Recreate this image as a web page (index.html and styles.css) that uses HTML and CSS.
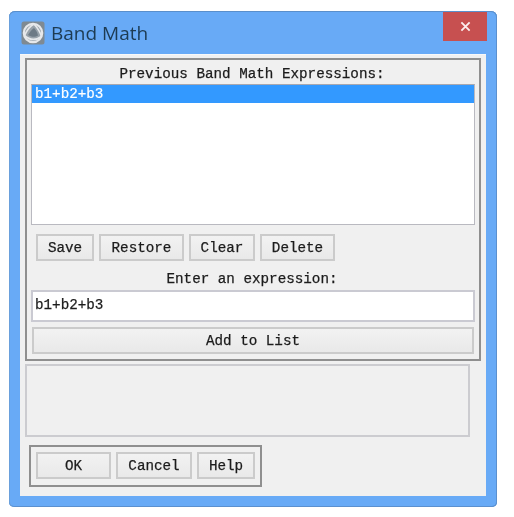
FILE: index.html
```html
<!DOCTYPE html>
<html lang="en">
<head>
<meta charset="utf-8">
<title>Band Math</title>
<link rel="stylesheet" href="styles.css">
</head>
<body>
<div class="window">
  <div class="titlebar">
    <svg class="app-icon" width="24" height="24" viewBox="0 0 24 24" aria-hidden="true">
      <rect x="0.5" y="0.5" width="23" height="23" rx="2.5" fill="#7f8a92"/>
      <circle cx="12" cy="12" r="9.2" fill="#98a2aa" stroke="#e6e8ea" stroke-width="2.2"/>
      <path d="M3.5 14.5C6.5 8 9 5 13 3M13 3C17 7.5 19.5 12 20.5 15.5M3.5 14.5C9 19.5 15 19.5 20.5 15.5" fill="none" stroke="#e6e8ea" stroke-width="1.7"/>
      <path d="M7 14C9 10.5 11 8.5 13 7C15 9 16.5 12 17 14.5C14 16.5 10 16 7 14Z" fill="#6d7a85"/>
    </svg>
    <span class="title">Band Math</span>
    <div class="close"><svg width="11" height="11" viewBox="0 0 12 12" aria-hidden="true"><path d="M1.5 1.5L10.5 10.5M10.5 1.5L1.5 10.5" stroke="#fbeeee" stroke-width="2" fill="none"/></svg></div>
  </div>
  <div class="client">
    <div class="panel">
      <div class="label">Previous Band Math Expressions:</div>
      <div class="list"><div class="row-selected">b1+b2+b3</div></div>
      <div class="list-actions">
        <button class="btn btn-save">Save</button>
        <button class="btn btn-restore">Restore</button>
        <button class="btn btn-clear">Clear</button>
        <button class="btn btn-delete">Delete</button>
      </div>
      <div class="label label-entry">Enter an expression:</div>
      <div class="entry">b1+b2+b3</div>
      <button class="btn btn-add">Add to List</button>
    </div>
    <div class="message"></div>
    <div class="footer">
      <button class="btn btn-ok">OK</button>
      <button class="btn btn-cancel">Cancel</button>
      <button class="btn btn-help">Help</button>
    </div>
  </div>
</div>
</body>
</html>
```
FILE: styles.css
```css
html, body {
  margin: 0;
  padding: 0;
  background: #fff;
}
body {
  padding: 11px 17px 10px 9px;
  font-family: "Liberation Mono", "DejaVu Sans Mono", monospace;
  font-size: 14.25px;
  color: #1c1c1c;
  -webkit-text-stroke: 0.25px #1c1c1c;
}
.window {
  width: 488px;
  height: 496px;
  box-sizing: border-box;
  background: #68aaf6;
  border-radius: 6px 6px 5px 5px;
  box-shadow: inset 0 1px 0 #5a8fcb, inset 1px 0 0 #6aa0dc, inset -1px 0 0 #5b90cf, inset 0 -1px 0 #5b90cf;
  padding: 0 11px 11px;
  filter: blur(0.5px);
}
.titlebar {
  height: 43px;
  display: flex;
  align-items: flex-start;
  position: relative;
}
.app-icon {
  margin: 10px 0 0 1px;
  flex: none;
}
.title {
  margin: 8px 0 0 6px;
  font-family: "Open Sans", "Noto Sans", sans-serif;
  font-size: 19px;
  line-height: 28px;
  color: #1d3b52;
  -webkit-text-stroke: 0;
}
.close {
  position: absolute;
  top: 1px;
  right: -1px;
  width: 44px;
  height: 29px;
  background: #c75050;
  display: flex;
  align-items: center;
  justify-content: center;
}
.client {
  height: 442px;
  box-sizing: border-box;
  background: #f0f0f0;
  box-shadow: inset 0 1px 0 #f8f8f8;
  padding: 4px 5px 0;
}
.panel {
  width: 456px;
  height: 303px;
  box-sizing: border-box;
  border: 2px solid #8f8f8f;
  padding: 4px 4px 0;
}
.label {
  height: 20px;
  line-height: 20px;
  text-align: center;
  text-indent: -2px;
}
.list {
  height: 141px;
  box-sizing: border-box;
  background: #fff;
  border: 1px solid #b9b9c0;
  border-top-color: #a8a8b0;
}
.row-selected {
  height: 18px;
  line-height: 18px;
  padding-left: 3px;
  background: #3399ff;
  color: #fff;
  -webkit-text-stroke: 0.2px #fff;
}
.list-actions {
  display: flex;
  gap: 5px;
  margin: 9px 0 0 5px;
}
.btn {
  display: block;
  height: 27px;
  box-sizing: border-box;
  padding: 0;
  font: inherit;
  color: inherit;
  background: linear-gradient(#f2f2f2, #e9e9e9);
  border: 2px solid #cbcbcb;
  border-radius: 0;
}
.btn-save { width: 58px; }
.btn-restore { width: 85px; }
.btn-clear { width: 66px; }
.btn-delete { width: 75px; }
.label-entry {
  margin-top: 8px;
  margin-bottom: 1px;
}
.entry {
  height: 32px;
  box-sizing: border-box;
  background: #fff;
  border: 2px solid #cacad2;
  line-height: 26px;
  padding-left: 2px;
}
.btn-add {
  width: 442px;
  margin: 5px 0 0 1px;
}
.message {
  width: 445px;
  height: 73px;
  box-sizing: border-box;
  margin-top: 3px;
  border: 2px solid #ccccd0;
  background: #f0f0f0;
}
.footer {
  width: 233px;
  height: 42px;
  box-sizing: border-box;
  margin: 8px 0 0 4px;
  padding: 5px;
  border: 2px solid #8f8f8f;
  display: flex;
  gap: 5px;
}
.btn-ok { width: 75px; }
.btn-cancel { width: 76px; }
.btn-help { width: 58px; }
```
